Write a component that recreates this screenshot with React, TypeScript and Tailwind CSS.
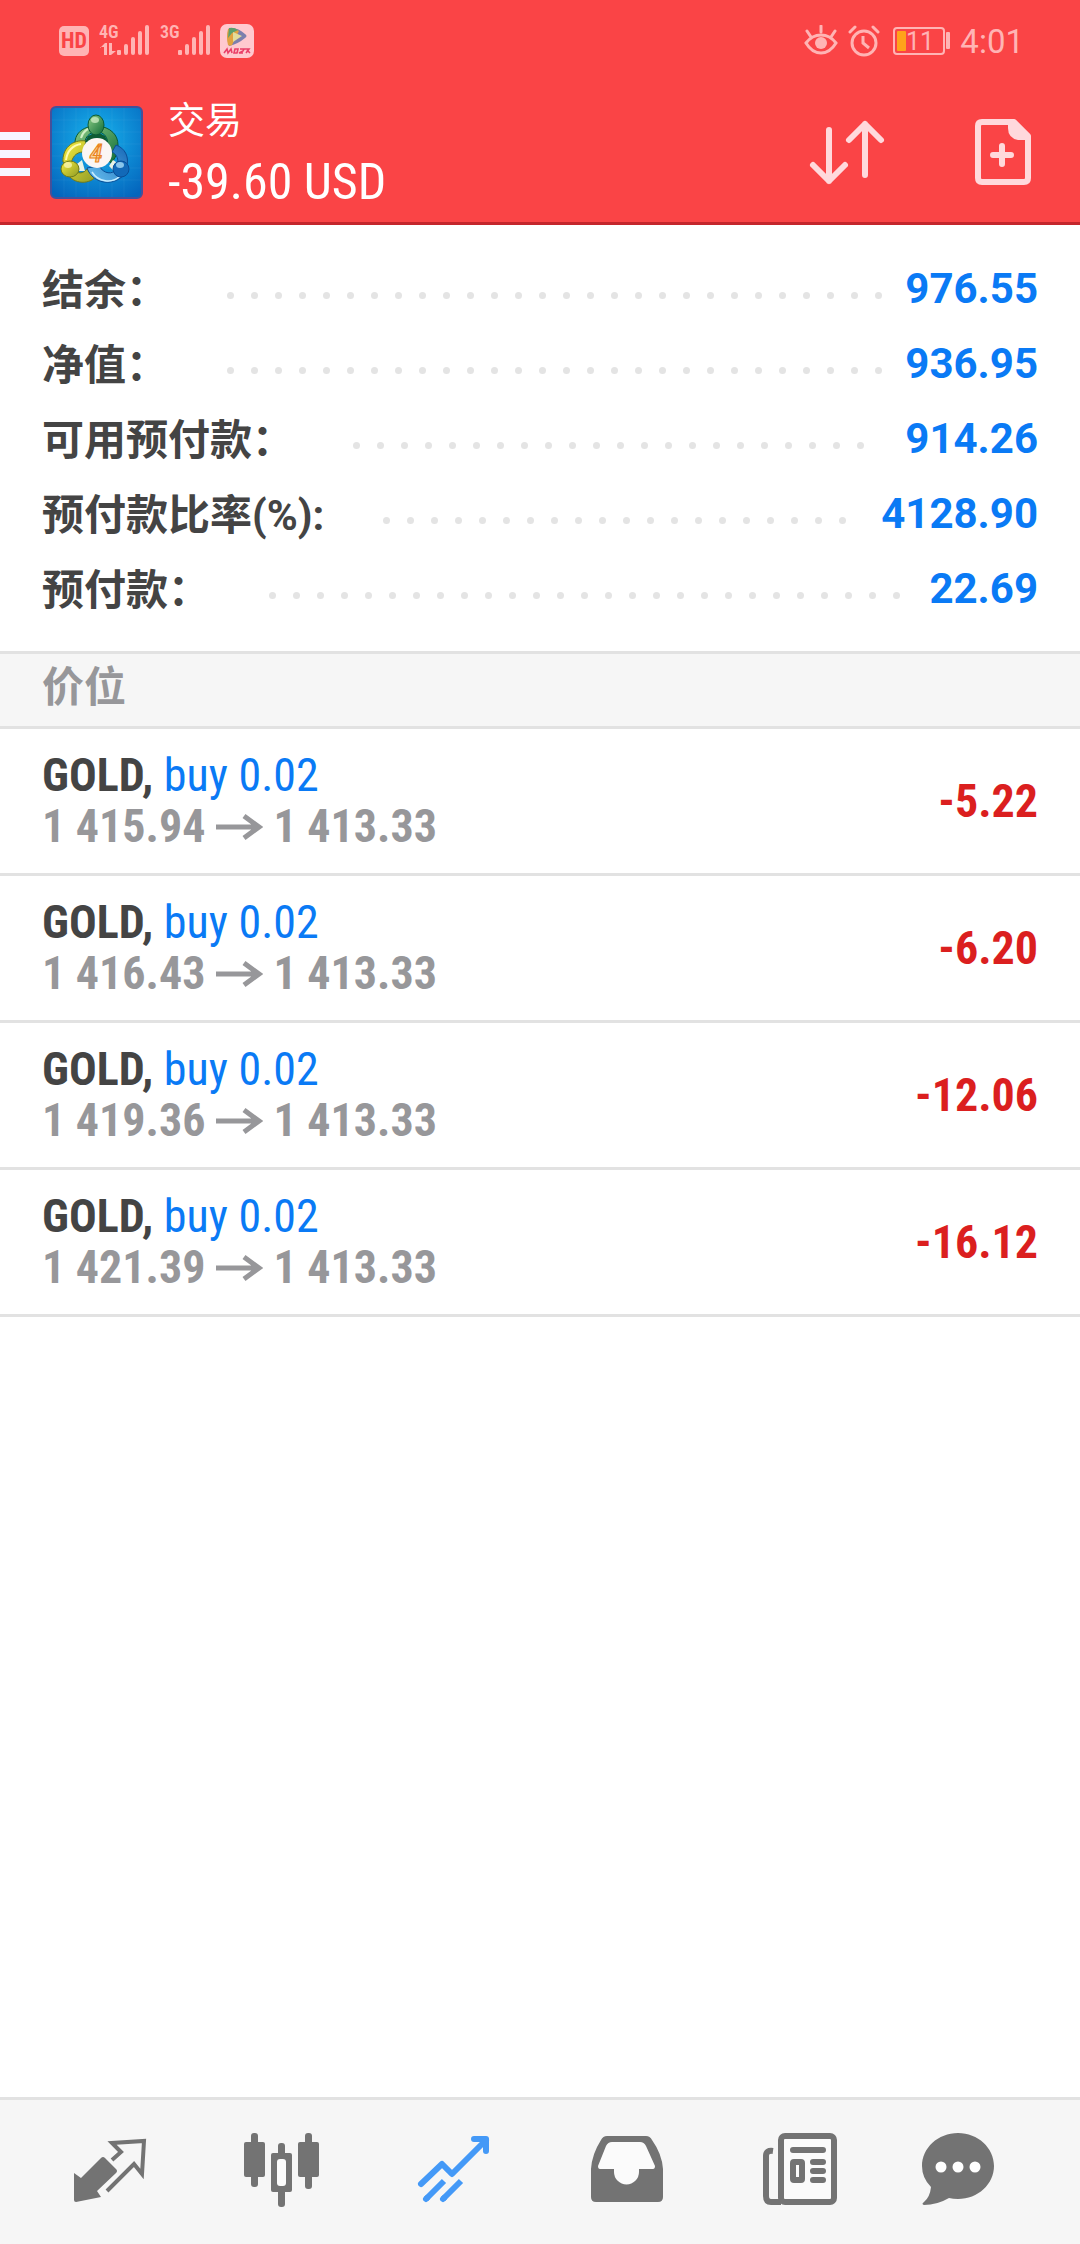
import type { ReactNode } from "react";

interface Position {
  readonly id: number;
  readonly symbol: string;
  readonly side: string;
  readonly open: string;
  readonly current: string;
  readonly profit: string;
}

const summary = [
  { label: "结余：", value: "976.55" },
  { label: "净值：", value: "936.95" },
  { label: "可用预付款：", value: "914.26" },
  { label: "预付款比率(%):", value: "4128.90" },
  { label: "预付款：", value: "22.69" },
];

const positions: Position[] = [
  { id: 1, symbol: "GOLD", side: "buy 0.02", open: "1 415.94", current: "1 413.33", profit: "-5.22" },
  { id: 2, symbol: "GOLD", side: "buy 0.02", open: "1 416.43", current: "1 413.33", profit: "-6.20" },
  { id: 3, symbol: "GOLD", side: "buy 0.02", open: "1 419.36", current: "1 413.33", profit: "-12.06" },
  { id: 4, symbol: "GOLD", side: "buy 0.02", open: "1 421.39", current: "1 413.33", profit: "-16.12" },
];

function Signal({ label, data }: { readonly label: string; readonly data?: boolean }) {
  return (
    <svg viewBox="0 -4 52 42" className="h-[42px] w-[52px]" fill="currentColor">
      <text x="0" y="14" fontSize="18" fontWeight="600" className="font-['Roboto_Condensed','Roboto',sans-serif]">
        {label}
      </text>
      {data && <path d="M1 24l5-5h2v12H5v-8H1zM10 19h3v8h4l-5 4h-2z" />}
      <rect x="18" y="26" width="4" height="5" rx="1" />
      <rect x="25" y="20" width="4" height="11" rx="2" />
      <rect x="32" y="13" width="4" height="18" rx="2" />
      <rect x="39" y="7" width="4" height="24" rx="2" />
      <rect x="46" y="1" width="4" height="30" rx="2" />
    </svg>
  );
}

function StatusBar() {
  return (
    <div className="flex h-[82px] items-center justify-between pl-[59px] pr-14 text-[#ffb4b4]">
      <div className="flex items-center">
        <span className="flex size-[30px] items-center justify-center rounded-[5px] bg-[#ffb4b4] font-['Roboto_Condensed','Roboto',sans-serif] text-[22px] font-bold leading-none text-[#fa4446]">
          HD
        </span>
        <span className="ml-2.5">
          <Signal label="4G" data />
        </span>
        <span className="ml-[9px]">
          <Signal label="3G" />
        </span>
        <svg viewBox="0 0 34 34" className="ml-2 size-[34px]">
          <rect width="34" height="34" rx="7" fill="#ffc9cf" />
          <path d="M9 4q9-1 16 6 3 2 0 4-7 6-16 8-3-9 0-18z" fill="#7c7fae" />
          <path d="M8 5q6-2 11 2l-7 14q-2 1-4 0-2-8 0-16z" fill="#e2a23f" />
          <path d="M9 4q5-1 9 2l-6 3-4 5z" fill="#5c9f6d" />
          <path d="M13 8l9 4-9 6z" fill="#e3dc9a" />
          <path d="M4 29l3-4 1 4 3-4 1 4m2 0l1-4h3l-1 4zm6-4h4l-1 2-4 2h4m1-4h5l-3 4m1-3l3 3" fill="none" stroke="#ea3f68" strokeWidth="1.6" />
        </svg>
      </div>
      <div className="flex items-center">
        <svg viewBox="0 0 34 32" className="h-8 w-[34px]" fill="none" stroke="currentColor" strokeWidth="3">
          <path d="M2 18q6-8 15-8t15 8q-6 10-15 10T2 18z" />
          <path d="M17 1v6M3 6l4 6M31 6l-4 6" strokeLinecap="round" />
          <circle cx="17" cy="18" r="6" fill="currentColor" stroke="none" />
        </svg>
        <svg viewBox="0 0 32 32" className="ml-2.5 size-8" fill="none" stroke="currentColor" strokeWidth="3">
          <circle cx="16" cy="18" r="12" />
          <path d="M15 11v7l6 5" />
          <path d="M2 7l5-5M30 7l-5-5" strokeLinecap="round" />
        </svg>
        <svg viewBox="0 0 60 30" className="ml-3 h-[30px] w-[60px]">
          <rect x="2" y="2" width="50" height="26" rx="3" fill="none" stroke="currentColor" strokeWidth="2" />
          <rect x="5" y="5" width="9" height="20" rx="1" fill="#ffa31a" />
          <rect x="54" y="6" width="4" height="17" rx="1" fill="currentColor" />
          <text x="14" y="24" fontSize="25" fill="currentColor" className="font-['Roboto',sans-serif]">
            11
          </text>
        </svg>
        <span className="ml-2 text-[33px] leading-none">4:01</span>
      </div>
    </div>
  );
}

function AppLogo() {
  return (
    <svg viewBox="0 0 93 93" className="size-[93px]">
      <defs>
        <radialGradient id="sky" cx="0.5" cy="0.35" r="0.75">
          <stop offset="0" stopColor="#18b4ee" />
          <stop offset="1" stopColor="#0465bd" />
        </radialGradient>
        <linearGradient id="green" x1="0" y1="0" x2="1" y2="1">
          <stop offset="0" stopColor="#8fce86" />
          <stop offset="1" stopColor="#0e6a35" />
        </linearGradient>
        <linearGradient id="yellow" x1="0" y1="0" x2="1" y2="1">
          <stop offset="0" stopColor="#f6ec3c" />
          <stop offset="1" stopColor="#8f9a26" />
        </linearGradient>
        <linearGradient id="blue" x1="1" y1="0" x2="0" y2="1">
          <stop offset="0" stopColor="#1565b5" />
          <stop offset="1" stopColor="#6cc4f2" />
        </linearGradient>
      </defs>
      <rect x="1" y="1" width="91" height="91" rx="5" fill="url(#sky)" stroke="#44509a" strokeWidth="2" />
      <path d="M14 2v89M26 2v89M38 2v89M50 2v89M62 2v89M74 2v89M2 14h89M2 26h89M2 38h89M2 50h89M2 62h89M2 74h89" stroke="#fff" strokeOpacity="0.05" />
      <path d="M25 37C25 14 68 14 68 39c0 8-3 14-7 18l-7-6c5-7 6-20-2-24-7-3-15 0-17 8z" fill="url(#green)" stroke="#0b5a34" strokeWidth="1" />
      <path d="M31 32c2-7 8-11 14-11" fill="none" stroke="#d2f0c4" strokeWidth="2" />
      <path d="M36 35c-14-2-24 8-23 21l8 4c0-8 5-14 12-14zM17 67c6 12 24 12 30 2l-10-6c-4 5-9 5-13 1z" fill="url(#yellow)" stroke="#6f7a1a" strokeWidth="1" />
      <path d="M16 54c1-9 7-15 15-16" fill="none" stroke="#fffbb0" strokeWidth="2" />
      <path d="M66 39c9 3 13 12 11 20l-9-2c0-6-2-9-6-11zM37 62c6 17 29 19 38 5l-8-4c-5 6-13 5-18-3z" fill="url(#blue)" stroke="#0a4d96" strokeWidth="1" />
      <path d="M42 66c6 10 20 12 28 4" fill="none" stroke="#c7ecff" strokeWidth="1.5" />
      <path d="M27 58l5-4 3 11h-6zM59 60l4-6 6 4-4 8z" fill="#e9f3e6" />
      <path d="M38 30q9-6 17 0l3 6H35z" fill="#0d5c34" />
      <ellipse cx="46" cy="19" rx="8" ry="10" fill="url(#green)" stroke="#0b5a34" strokeWidth="1" />
      <ellipse cx="45" cy="14" rx="4" ry="3" fill="#d8f3cd" fillOpacity="0.7" />
      <ellipse cx="20" cy="63" rx="9" ry="8" fill="url(#yellow)" stroke="#6f7a1a" strokeWidth="1" />
      <ellipse cx="18" cy="59" rx="4" ry="3" fill="#fdfbc0" fillOpacity="0.7" />
      <ellipse cx="71" cy="63" rx="8" ry="8" fill="#1269b8" stroke="#0a4d96" strokeWidth="1" />
      <ellipse cx="70" cy="59" rx="4" ry="3" fill="#a8dcf8" fillOpacity="0.8" />
      <circle cx="47" cy="47" r="15" fill="#fbf6f4" />
      <text x="46" y="56" fontSize="26" fontWeight="500" fontStyle="italic" textAnchor="middle" fill="#fbd9a0" stroke="#ea8420" strokeWidth="1.2" className="font-['Roboto_Condensed','Roboto',sans-serif]">
        4
      </text>
    </svg>
  );
}

function Header() {
  return (
    <header className="border-b-[3px] border-[#c4262c] bg-[#fa4446]">
      <StatusBar />
      <div className="flex h-[140px] items-center pr-[46px]">
        <button aria-label="菜单" className="flex w-[30px] flex-col gap-2.5 pt-1">
          <span className="h-2 bg-[#f8f4ff]" />
          <span className="h-2 bg-[#f8f4ff]" />
          <span className="h-2 bg-[#f8f4ff]" />
        </button>
        <span className="ml-5">
          <AppLogo />
        </span>
        <div className="ml-[25px] flex-1 pt-1 text-white">
          <h1 className="text-[37px] font-normal leading-[56px]">交易</h1>
          <p className="font-['Roboto_Condensed','Roboto',sans-serif] text-[50px] leading-[64px]">-39.60 USD</p>
        </div>
        <button aria-label="排序">
          <svg viewBox="0 0 78 68" className="h-[68px] w-[78px]" fill="none" stroke="#ffd9dc" strokeWidth="6" strokeLinecap="round" strokeLinejoin="round">
            <path d="M21 12v51M5 47l16 16 16-16M57 57V6M41 22L57 6l16 16" />
          </svg>
        </button>
        <button aria-label="新订单" className="ml-[88px]">
          <svg viewBox="0 0 60 68" className="h-[68px] w-[60px]" fill="none" stroke="#ffd9dc" strokeWidth="6">
            <path d="M8 4h32l14 14v42q0 4-4 4H8q-4 0-4-4V8q0-4 4-4z" strokeLinejoin="round" />
            <path d="M34 3h7l14 14v5H44q-10-2-10-12z" fill="#ffd9dc" stroke="none" />
            <path d="M28 28v18M19 37h18" strokeLinecap="round" />
          </svg>
        </button>
      </div>
    </header>
  );
}

// Whole dots only: the ones that don't fit wrap onto a hidden line
function DotLeader() {
  return (
    <span aria-hidden="true" className="ml-[50px] mr-3.5 mt-3.5 flex h-2 flex-1 flex-wrap overflow-hidden">
      {Array.from({ length: 60 }, (_, i) => (
        <span key={i} className="flex h-2 w-6 justify-center">
          <span className="size-[7px] rounded-full bg-[#e4e4e4]" />
        </span>
      ))}
    </span>
  );
}

function Summary() {
  return (
    <dl className="pb-[25px] pl-[42px] pr-[42px] pt-[26px]">
      {summary.map((row) => (
        <div key={row.label} className="flex h-[75px] items-center text-[42px] font-bold">
          <dt className="pt-1 text-[#444]">{row.label}</dt>
          <DotLeader />
          <dd className="text-[#0a7af5]">{row.value}</dd>
        </div>
      ))}
    </dl>
  );
}

function PositionRow({ position }: { readonly position: Position }) {
  return (
    <li className="flex items-center justify-between border-b-[3px] border-[#e2e2e2] px-[42px] py-[21px] font-['Roboto_Condensed','Roboto',sans-serif] text-[46px] font-bold leading-[51px]">
      <div>
        <p className="text-[#444]">
          {position.symbol}, <span className="font-normal text-[#0a7af5]">{position.side}</span>
        </p>
        <p className="flex items-center text-[#97979a]">
          {position.open}
          <svg viewBox="0 0 48 28" className="mx-2.5 h-7 w-12" fill="none" stroke="currentColor" strokeWidth="5">
            <path d="M1 14h43M29 3l15 11-15 11" />
          </svg>
          {position.current}
        </p>
      </div>
      <p className="text-[#db1f1f]">{position.profit}</p>
    </li>
  );
}

const tabs: { label: string; active?: boolean; icon: ReactNode }[] = [
  {
    label: "行情",
    icon: (
      <>
        <path d="M12 49l7 5 20-20q2-2 4 0l11 11q2 2 0 4L35 67l4 6-25 5q-2 0-2-2z" fill="currentColor" />
        <path d="M50 36l9-8-9-9 32-2-2 33-8-10-27 27" fill="none" stroke="currentColor" strokeWidth="4" />
      </>
    ),
  },
  {
    label: "图表",
    icon: (
      <g fill="currentColor">
        <rect x="10" y="18" width="21" height="35" rx="2" />
        <rect x="17" y="9" width="7" height="54" rx="3" />
        <rect x="64" y="18" width="21" height="35" rx="2" />
        <rect x="71" y="9" width="7" height="56" rx="3" />
        <rect x="37" y="29" width="21" height="39" rx="2" />
        <rect x="44" y="19" width="7" height="64" rx="3" />
        <rect x="43" y="35" width="9" height="27" rx="3" fill="#fbfbfb" />
      </g>
    ),
  },
  {
    label: "交易",
    active: true,
    icon: (
      <g fill="none" stroke="currentColor" strokeWidth="6" strokeLinejoin="round">
        <path d="M15 60l21-20 10 10 34-34" strokeLinecap="round" />
        <path d="M68 15h12v12" strokeLinecap="round" />
        <path d="M20 75l18-18M37 75l18-18" />
        <path d="M20 75l1-1M37 75l1-1" strokeLinecap="round" />
      </g>
    ),
  },
  {
    label: "历史",
    icon: (
      <>
        <path d="M29 12h39q4 0 6 4 10 14 11 29v28q0 5-5 5H18q-5 0-5-5V45q1-15 10-29 2-4 6-4z" fill="currentColor" />
        <path d="M34 18h28q4 0 6 4l9 20q0 3-2 3H61v3a12 12 0 0 1-25 0v-3H22q-2 0-2-3l8-20q2-4 6-4z" fill="#fbfbfb" />
      </>
    ),
  },
  {
    label: "新闻",
    icon: (
      <g fill="none" stroke="currentColor" strokeWidth="6">
        <rect x="31" y="12" width="53" height="66" rx="4" fill="#fbfbfb" />
        <path d="M23 27q-7-1-7 5v40q0 6 5 6h10" />
        <path d="M43 26h30M63 38h10M63 47h10M63 56h10" strokeLinecap="round" />
        <rect x="43" y="38" width="9" height="18" rx="1" />
      </g>
    ),
  },
  {
    label: "消息",
    icon: (
      <>
        <path d="M36 9c20 0 36 15 36 33S56 75 36 75q-5 0-9-1Q15 81 2 81q-3-1 0-3 6-5 7-15Q0 54 0 42C0 24 16 9 36 9z" fill="currentColor" />
        <g fill="#fff">
          <circle cx="19" cy="43" r="5.5" />
          <circle cx="36" cy="43" r="5.5" />
          <circle cx="53" cy="43" r="5.5" />
        </g>
      </>
    ),
  },
];

function TabBar() {
  return (
    <nav className="mt-auto grid h-[147px] grid-cols-6 border-t-[3px] border-[#e2e2e2] bg-[#f6f6f6] px-6">
      {tabs.map((tab) => (
        <button
          key={tab.label}
          aria-label={tab.label}
          className={`flex items-center justify-center ${tab.active ? "text-[#4499f7]" : "text-[#737373]"}`}
        >
          <svg viewBox="0 0 96 96" className="size-24">
            {tab.icon}
          </svg>
        </button>
      ))}
    </nav>
  );
}

export default function App() {
  return (
    <div className="flex min-h-screen flex-col bg-white font-['Roboto','Noto_Sans_CJK_SC',sans-serif]">
      <Header />
      <main>
        <Summary />
        <h2 className="border-y-[3px] border-[#e2e2e2] bg-[#f6f6f6] pb-1 pl-[42px] text-[42px] font-bold leading-[68px] text-[#97979a]">
          价位
        </h2>
        <ul>
          {positions.map((position) => (
            <PositionRow key={position.id} position={position} />
          ))}
        </ul>
      </main>
      <TabBar />
    </div>
  );
}
